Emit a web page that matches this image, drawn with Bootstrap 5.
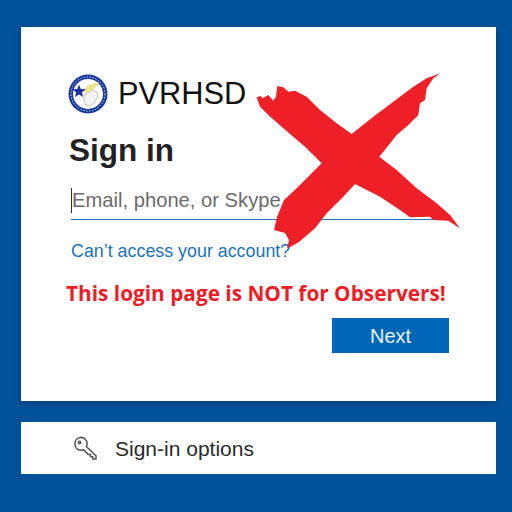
<!DOCTYPE html>
<html lang="en">
<head>
  <meta charset="UTF-8" />
  <title>Sign in</title>
  <meta name="viewport" content="width=device-width, initial-scale=1" />
  <link href="https://cdn.jsdelivr.net/npm/bootstrap@5.3.2/dist/css/bootstrap.min.css" rel="stylesheet" />
  <style>
    body {
      background-color: #00529b;
      font-family: "Liberation Sans", Arial, sans-serif;
      padding: 27px 16px 0 21px;
    }
    .login-box {
      height: 374px;
      padding: 47px 47px 0 47px;
      box-shadow: 0 2px 6px rgba(0, 0, 0, 0.25);
    }
    .logo-name {
      font-size: 30.800px;
      line-height: 40px;
      color: #111;
      margin-left: 10px;
    }
    .sign-title {
      font-size: 31.500px;
      line-height: 40px;
      font-weight: 700;
      color: #222;
      margin: 16px 0 0 1px;
    }
    .email-field {
      height: 39px;
      margin: 11px 0 0 3px;
      border-bottom: 1px solid #1f74bd;
      font-size: 20.200px;
      color: #6b6b6b;
      line-height: 39px;
    }
    .caret-bar {
      width: 1px;
      height: 25px;
      background: #333;
    }
    .help-link {
      display: block;
      margin: 21px 0 0 3px;
      font-size: 17.850px;
      line-height: 20px;
      color: #1a73bd;
      text-decoration: none;
      white-space: nowrap;
    }
    .warn-text {
      font-family: "Open Sans", sans-serif;
      font-weight: 700;
      font-size: 20.800px;
      line-height: 28px;
      color: #ee1c25;
      margin: 18px 0 0 -2px;
      white-space: nowrap;
    }
    .next-btn {
      width: 117px;
      height: 35px;
      margin-top: 11px;
      padding: 0;
      border-radius: 0;
      font-size: 20px;
      color: #eaf3fb;
      background: #0067b8;
      border: 1px solid #0067b8;
    }
    .x-mark {
      position: absolute;
      left: 219px;
      top: 33px;
      width: 230px;
      height: 210px;
    }
    .options-box {
      height: 52px;
      margin-top: 21px;
      padding: 2px 0 0 52px;
      font-size: 21px;
      color: #2b2b2b;
      gap: 16px;
    }
  </style>
</head>
<body>
  <div class="login-box bg-white position-relative">
    <div class="d-flex align-items-center">
      <svg width="40" height="40" viewBox="0 0 40 40">
        <circle cx="20" cy="20" r="19.500" fill="#1a3a9c" />
        <circle cx="20" cy="20" r="15" fill="#fff" />
        <circle cx="20" cy="20" r="17" fill="none" stroke="#c8d0e6" stroke-width="1" stroke-dasharray="1.500 1.500" />
        <path d="M18 31c-3-3-3-8 0-11l6-4 5 2 1 5-4 6-4 3z" fill="#f4f4f4" stroke="#a8a8a8" stroke-width=".7" />
        <path d="M14 17c4-5 10-8 17-9-1 4-7 9-12 11z" fill="#ece48c" />
        <path d="M11 10.500l1.700 4.600 4.900.2-3.800 3.100 1.300 4.700-4.100-2.700-4.100 2.700 1.300-4.700-3.800-3.100 4.900-.2z" fill="#1b2f9f" />
      </svg>
      <span class="logo-name">PVRHSD</span>
    </div>
    <h1 class="sign-title">Sign in</h1>
    <div class="email-field d-flex align-items-center">
      <span class="caret-bar"></span><span>Email, phone, or Skype</span>
    </div>
    <a class="help-link" href="#">Can’t access your account?</a>
    <p class="warn-text">This login page is NOT for Observers!</p>
    <div class="d-flex justify-content-end">
      <button type="button" class="btn next-btn">Next</button>
    </div>
    <svg class="x-mark" viewBox="0 0 690 630">
      <polygon fill="#ee1f27" points="50,112 62,108 68,115 85,105 100,122 108,110 112,78 130,82 145,95 165,92 200,110 240,150 290,190 335,222 400,170 460,125 520,80 560,55 602,40 580,55 560,85 555,120 540,130 535,165 505,195 470,225 418,290 470,330 530,385 590,430 630,465 660,505 625,482 580,480 570,470 510,472 480,450 420,410 345,372 310,410 260,460 225,505 177,546 141,566 147,540 135,519 102,510 111,471 132,420 170,385 245,310 195,260 165,235 130,205 85,165 60,140" />
    </svg>
  </div>
  <div class="options-box bg-white d-flex align-items-center">
    <svg width="26" height="26" viewBox="0 0 26 26" fill="none" stroke="#555" stroke-width="1.500">
      <path d="M2 7.500a6 6 0 0 1 10.500-4 6 6 0 0 1 .8 7l9.700 9.200v3.300h-3.200v-2.300h-2.300v-2.300h-2.300l-4.700-4.700a6 6 0 0 1-8.500-6.200z" />
      <circle cx="6.500" cy="6.500" r="1.200" />
    </svg>
    <span>Sign-in options</span>
  </div>
  <script src="https://cdn.jsdelivr.net/npm/bootstrap@5.3.2/dist/js/bootstrap.bundle.min.js"></script>
</body>
</html>
